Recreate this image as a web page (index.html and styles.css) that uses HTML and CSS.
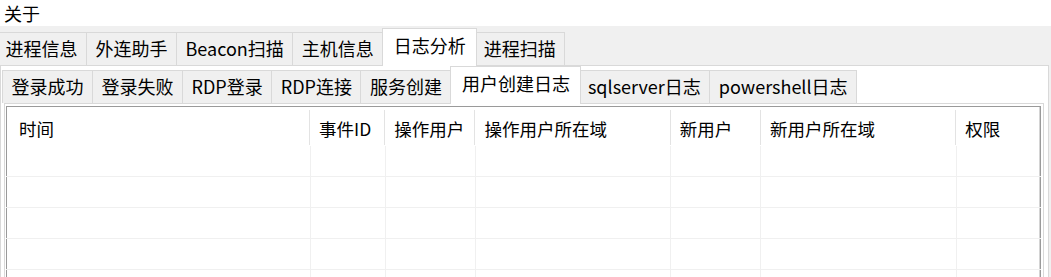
FILE: index.html
```html
<!DOCTYPE html>
<html lang="zh-CN">

<head>
    <meta charset="UTF-8">
    <title>日志分析</title>
    <link rel="stylesheet" href="styles.css">
</head>

<body>
    <div class="menu">关于</div>
    <div class="outer">
        <div class="tabbar top">
            <span class="tab">进程信息</span>
            <span class="tab">外连助手</span>
            <span class="tab">Beacon扫描</span>
            <span class="tab">主机信息</span>
            <span class="tab active">日志分析</span>
            <span class="tab">进程扫描</span>
        </div>
        <div class="pane">
            <div class="tabbar sub">
                <span class="tab">登录成功</span>
                <span class="tab">登录失败</span>
                <span class="tab">RDP登录</span>
                <span class="tab">RDP连接</span>
                <span class="tab">服务创建</span>
                <span class="tab active">用户创建日志</span>
                <span class="tab">sqlserver日志</span>
                <span class="tab">powershell日志</span>
            </div>
            <div class="pane inner-pane">
                <table class="list">
                    <colgroup>
                        <col class="c-time">
                        <col class="c-id">
                        <col class="c-user">
                        <col class="c-domain">
                        <col class="c-user">
                        <col class="c-domain">
                        <col class="c-rights">
                    </colgroup>
                    <thead>
                        <tr>
                            <th class="first">时间</th>
                            <th>事件ID</th>
                            <th>操作用户</th>
                            <th>操作用户所在域</th>
                            <th>新用户</th>
                            <th>新用户所在域</th>
                            <th>权限</th>
                        </tr>
                    </thead>
                    <tbody>
                        <tr><td></td><td></td><td></td><td></td><td></td><td></td><td></td></tr>
                        <tr><td></td><td></td><td></td><td></td><td></td><td></td><td></td></tr>
                        <tr><td></td><td></td><td></td><td></td><td></td><td></td><td></td></tr>
                        <tr><td></td><td></td><td></td><td></td><td></td><td></td><td></td></tr>
                        <tr><td></td><td></td><td></td><td></td><td></td><td></td><td></td></tr>
                    </tbody>
                </table>
            </div>
        </div>
    </div>
</body>

</html>
```

FILE: styles.css
```css
* {
    margin: 0;
    padding: 0;
    box-sizing: border-box;
}

body {
    width: 1051px;
    height: 277px;
    overflow: hidden;
    background: #fff;
    color: #000;
    font-family: "Noto Sans CJK SC", "Noto Sans", sans-serif;
    font-size: 18px;
}

.menu {
    height: 26px;
    line-height: 26px;
    padding-left: 4px;
}

.outer {
    background: #f0f0f0;
    padding-top: 6px;
    height: 300px;
}

.tabbar {
    display: flex;
    align-items: flex-end;
    height: 33px;
}

.tabbar.top {
    margin-left: -4px;
}

.tabbar.sub {
    margin-left: -2px;
}

.tab {
    height: 33px;
    line-height: 31px;
    padding: 0 8.5px;
    margin-right: -1px;
    background: #f0f0f0;
    border: 1px solid #d9d9d9;
    border-bottom: none;
    white-space: nowrap;
}

.tab.active {
    position: relative;
    z-index: 1;
    height: 38px;
    line-height: 33px;
    padding: 0 10.5px;
    margin-bottom: -1px;
    margin-right: -3px;
    background: #fff;
}

.pane {
    width: 1049px;
    height: 260px;
    padding: 4px 4px 0 3px;
    background: #fff;
    border: 1px solid #d9d9d9;
}

.inner-pane {
    width: 1040px;
    height: 200px;
    padding: 2px 2px 0 1px;
}

.list {
    width: 1035px;
    table-layout: fixed;
    border-collapse: collapse;
    border: 1px solid #9a9a9a;
    box-shadow: inset -1px 0 0 #d4d4d4;
}

.c-time { width: 303px; }
.c-id { width: 75px; }
.c-user { width: 90px; }
.c-domain { width: 195px; }
.c-rights { width: 84px; }

.list th {
    height: 39px;
    padding: 4px 0 0 9px;
    text-align: left;
    font-size: 17.5px;
    font-weight: normal;
    white-space: nowrap;
    background: linear-gradient(#e3e3e3, #e3e3e3) right 3px / 1px 35px no-repeat;
}

.list th.first {
    padding-left: 12px;
}

.list th:last-child {
    background: none;
}

.list td {
    height: 31px;
    border-right: 1px solid #f0f0f0;
    border-bottom: 1px solid #f0f0f0;
}

.list td:last-child {
    border-right: none;
}
```
